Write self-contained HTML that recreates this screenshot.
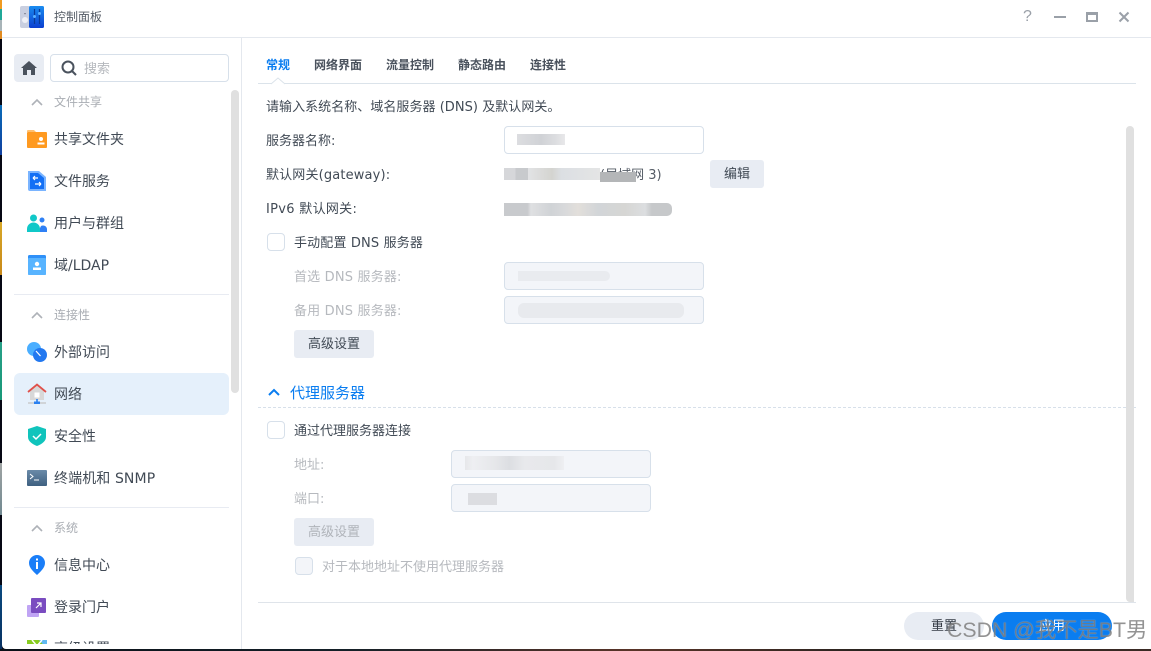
<!DOCTYPE html>
<html><head><meta charset="utf-8"><style>
*{box-sizing:border-box}
html,body{margin:0;padding:0;width:1151px;height:651px;overflow:hidden;background:#0a0d18}
body{position:relative;font-family:"DejaVu Sans","Noto Sans CJK SC",sans-serif;color:#414a55;font-size:13px}
.a{position:absolute}
.t{position:absolute;line-height:20px;white-space:nowrap}
.h{font-size:12px;color:#a9adb3}
.i{font-size:14px;left:54px;color:#414a55}
.tab{font-size:12px;font-weight:700;top:55px;color:#4a525d}
.d{color:#b6b9be}
.inp{position:absolute;width:200px;height:28px;border:1px solid #d7e0ea;border-radius:4px;background:#fff;overflow:hidden}
.dis{background:#f3f5f9}
.cb{position:absolute;width:18px;height:18px;border:1px solid #d7e0ea;border-radius:4px;background:#fff}
.btn{position:absolute;background:#e8ecf3;border-radius:3px;text-align:center;line-height:29px;color:#414a55}
.m{position:absolute}
svg{position:absolute;overflow:visible}
</style></head><body>
<div class="a" style="left:0;top:0;width:2px;height:651px;background:linear-gradient(#f09a20 0,#f09a20 9px,#20a898 9px,#20a898 20px,#a8b4b8 20px,#a8b4b8 31px,#e08a20 31px,#e08a20 39px,#060814 39px,#060814 105px,#0a6cb8 105px,#1040a0 155px,#060814 155px,#060814 222px,#d8a828 222px,#c88818 275px,#060814 275px,#060814 342px,#28a088 342px,#189878 400px,#060814 400px,#060814 463px,#a0a4a4 463px,#708890 515px,#060814 515px,#060814 585px,#0a4a80 585px,#083060 651px)"></div>
<div class="a" style="left:0;top:649px;width:1151px;height:2px;background:linear-gradient(90deg,#0a1018 0,#142028 30%,#5a3428 55%,#2a2420 75%,#3a2a24 100%)"></div>
<div class="a" style="left:2px;top:0;width:1149px;height:649px;background:#fff;border-bottom-left-radius:4px"></div>

<!-- title bar -->
<div class="a" style="left:2px;top:37px;width:1149px;height:1px;background:#e4e8ee"></div>
<svg style="left:20px;top:5px" width="24" height="24" viewBox="0 0 24 24">
<defs><linearGradient id="g1" x1="0" y1="0" x2="0" y2="1"><stop offset="0" stop-color="#1a8cf0"/><stop offset="1" stop-color="#0c3fd0"/></linearGradient></defs>
<rect x="0" y="1" width="10" height="22" rx="2" fill="#c9cfe0"/><circle cx="5" cy="15" r="3" fill="#eef0f6"/><rect x="4.4" y="8" width="1.2" height="1.2" fill="#667"/>
<rect x="9" y="1" width="15" height="22" rx="1.5" fill="url(#g1)"/>
<path d="M14.5 4v15M19.5 4v15" stroke="#0a3a98" stroke-width="1.2"/><rect x="13" y="10" width="3" height="3" rx="1.5" fill="#5ab0ff"/><rect x="18" y="7" width="3" height="3" rx="1.5" fill="#5ab0ff"/></svg>
<div class="t" style="left:54px;top:7px;font-size:12px;color:#555c66">控制面板</div>
<div class="t" style="left:1023px;top:7px;font-size:16px;color:#9aa0a8;font-family:'Liberation Sans',sans-serif">?</div>
<div class="a" style="left:1054px;top:16px;width:12px;height:2px;background:#9aa0a8"></div>
<div class="a" style="left:1086px;top:12px;width:12px;height:10px;border:2px solid #9aa0a8;border-top-width:3px;background:#fff"></div>
<svg style="left:1119px;top:12px" width="10" height="10" viewBox="0 0 10 10"><path d="M.5.5l9 9M9.500.5l-9 9" stroke="#9aa0a8" stroke-width="2" fill="none"/></svg>

<!-- sidebar -->
<div class="a" style="left:241px;top:38px;width:1px;height:611px;background:#e4e8ee"></div>
<div class="a" style="left:14px;top:54px;width:30px;height:28px;background:#e8ecf3;border-radius:4px"></div>
<svg style="left:21px;top:61px" width="16" height="14" viewBox="0 0 16 14"><path d="M8 0L0 7h2v7h4V9h4v5h4V7h2z" fill="#4a525d"/></svg>
<div class="a" style="left:50px;top:54px;width:179px;height:28px;border:1px solid #d7e0ea;border-radius:4px"></div>
<svg style="left:61px;top:60px" width="16" height="16" viewBox="0 0 16 16"><circle cx="7" cy="7" r="5.500" fill="none" stroke="#4a525d" stroke-width="2"/><path d="M11 11l4 4" stroke="#4a525d" stroke-width="2"/></svg>
<div class="t" style="left:84px;top:60px;color:#b5b8bd">搜索</div>
<div class="a" style="left:231px;top:90px;width:8px;height:303px;background:#e0e0e0;border-radius:4px"></div>

<svg style="left:31px;top:98px" width="12" height="8" viewBox="0 0 12 8"><path d="M1 7l5-5 5 5" fill="none" stroke="#aeb2b8" stroke-width="1.600"/></svg>
<div class="t h" style="left:54px;top:92px">文件共享</div>
<svg style="left:27px;top:129px" width="20" height="20" viewBox="0 0 20 20"><path d="M0 2a1 1 0 011-1h6l2 2h-9z" fill="#ffc070"/><rect y="3" width="20" height="16" rx="1" fill="#ff9a20"/><circle cx="14" cy="10" r="2" fill="#fff"/><rect x="10.500" y="13.500" width="7" height="2" fill="#fff"/></svg>
<div class="t i" style="top:130px">共享文件夹</div>
<svg style="left:28px;top:171px" width="18" height="20" viewBox="0 0 18 20"><path d="M0 0h11l7 6v14H2a2 2 0 01-2-2z" fill="#7ab4ff"/><path d="M2 2h8l6 5v11H2z" fill="#1470f5"/><path d="M5 7h5M5 7l2-2M5 7l2 2M13 13H7M13 13l-2-2M13 13l-2 2" stroke="#fff" stroke-width="1.200" fill="none"/></svg>
<div class="t i" style="top:172px">文件服务</div>
<svg style="left:27px;top:213px" width="20" height="20" viewBox="0 0 20 20"><circle cx="6.500" cy="5" r="3.500" fill="#10c8c8"/><circle cx="15" cy="7" r="2.500" fill="#2f80f5"/><path d="M11 19h9v-3a4 4 0 00-6-3z" fill="#2f80f5"/><path d="M0 19v-3a6 6 0 0113 0v3z" fill="#10c8c8"/></svg>
<div class="t i" style="top:214px">用户与群组</div>
<svg style="left:28px;top:255px" width="18" height="20" viewBox="0 0 18 20"><rect width="18" height="20" rx="1.500" fill="#2f90f8"/><rect y="3" width="18" height="17" rx="1" fill="#58b4ff"/><circle cx="9" cy="9" r="2.200" fill="#fff"/><rect x="5" y="12.500" width="8" height="2.500" fill="#fff"/></svg>
<div class="t i" style="top:256px">域/LDAP</div>
<div class="a" style="left:14px;top:294px;width:215px;height:1px;background:#e8ebf2"></div>

<svg style="left:31px;top:311px" width="12" height="8" viewBox="0 0 12 8"><path d="M1 7l5-5 5 5" fill="none" stroke="#aeb2b8" stroke-width="1.600"/></svg>
<div class="t h" style="left:54px;top:305px">连接性</div>
<svg style="left:27px;top:342px" width="20" height="20" viewBox="0 0 20 20"><circle cx="7" cy="7" r="7" fill="#4aaeff"/><circle cx="13" cy="13" r="7" fill="#2278f0"/><path d="M9 9l4.500 5" stroke="#fff" stroke-width="1.200"/></svg>
<div class="t i" style="top:343px">外部访问</div>
<div class="a" style="left:14px;top:373px;width:215px;height:42px;background:#e5f0fb;border-radius:6px"></div>
<svg style="left:27px;top:383px" width="20" height="22" viewBox="0 0 20 22"><path d="M3 8l7-6 7 6v9H3z" fill="#d8d8d8"/><rect x="7.500" y="9.500" width="5" height="5" fill="#fff"/><path d="M1 9l9-7.500L19 9" fill="none" stroke="#e0504a" stroke-width="1.800"/><rect x="1" y="19" width="18" height="2" fill="#d0d4d8"/><rect x="7" y="18.500" width="6" height="2.500" fill="#2a80f0"/><rect x="9.200" y="16" width="1.600" height="3" fill="#2a80f0"/></svg>
<div class="t i" style="top:385px">网络</div>
<svg style="left:28px;top:426px" width="18" height="20" viewBox="0 0 18 20"><path d="M9 0l9 3v8c0 4-4 7-9 9-5-2-9-5-9-9V3z" fill="#10c4bc"/><path d="M5 10l3 3 5-5" fill="none" stroke="#fff" stroke-width="1.500"/></svg>
<div class="t i" style="top:427px">安全性</div>
<svg style="left:27px;top:470px" width="20" height="16" viewBox="0 0 20 16"><defs><linearGradient id="g2" x1="0" y1="0" x2="0" y2="1"><stop offset="0" stop-color="#6a8aa8"/><stop offset="1" stop-color="#3e6080"/></linearGradient></defs><rect width="20" height="16" rx="1" fill="url(#g2)"/><path d="M3 4l3 2.500-3 2.500M7 10h5" fill="none" stroke="#fff" stroke-width="1"/></svg>
<div class="t i" style="top:469px;letter-spacing:.1px">终端机和 SNMP</div>
<div class="a" style="left:14px;top:507px;width:215px;height:1px;background:#e8ebf2"></div>

<svg style="left:31px;top:524px" width="12" height="8" viewBox="0 0 12 8"><path d="M1 7l5-5 5 5" fill="none" stroke="#aeb2b8" stroke-width="1.600"/></svg>
<div class="t h" style="left:54px;top:518px">系统</div>
<svg style="left:29px;top:555px" width="16" height="20" viewBox="0 0 16 20"><path d="M8 20C5 17 0 13 0 8a8 8 0 0116 0c0 5-5 9-8 12z" fill="#1a7ef8"/><rect x="7" y="7" width="2" height="7" fill="#fff"/><rect x="7" y="3.500" width="2" height="2" fill="#fff"/></svg>
<div class="t i" style="top:556px">信息中心</div>
<svg style="left:27px;top:598px" width="20" height="20" viewBox="0 0 20 20"><rect x="0" y="7" width="12" height="12" rx="1" fill="#c0a4f4"/><rect x="4" y="0" width="15" height="15" rx="1" fill="#7a4cc0"/><path d="M9 10l5-5M10 5h4v4" fill="none" stroke="#fff" stroke-width="1.200"/></svg>
<div class="t i" style="top:598px">登录门户</div>
<div class="a" style="left:27px;top:640px;width:20px;height:4px;overflow:hidden"><svg style="left:0;top:0" width="20" height="9" viewBox="0 0 20 9"><rect width="20" height="9" fill="#88cc20"/><path d="M12 0h8v9z" fill="#60b8f0"/><path d="M5 0l5 6 5-6" fill="none" stroke="#fff" stroke-width="1.500"/></svg></div>
<div class="a" style="left:54px;top:640px;width:70px;height:4px;overflow:hidden"><div class="t i" style="left:0;top:-1px">高级设置</div></div>

<!-- tabs -->
<div class="t tab" style="left:266px;color:#0a7df0">常规</div>
<div class="t tab" style="left:314px">网络界面</div>
<div class="t tab" style="left:386px">流量控制</div>
<div class="t tab" style="left:458px">静态路由</div>
<div class="t tab" style="left:530px">连接性</div>
<div class="a" style="left:258px;top:83px;width:878px;height:1px;background:#dbe3ea"></div>
<svg style="left:271px;top:77px" width="14" height="8" viewBox="0 0 14 8"><path d="M0 7l7-6 7 6" fill="#fff" stroke="#dbe3ea"/></svg>

<div class="t" style="left:266px;top:98px;letter-spacing:.04px">请输入系统名称、域名服务器 (DNS) 及默认网关。</div>
<div class="t" style="left:266px;top:132px">服务器名称:</div>
<div class="inp" style="left:504px;top:126px"></div>
<div class="m" style="left:517px;top:134px;width:48px;height:11px;background:linear-gradient(90deg,#dcdde0,#d0d2d6 50%,#dcdde0 80%,#e8e8ea)"></div>

<div class="t" style="left:266px;top:166px;letter-spacing:.15px">默认网关(gateway):</div>
<div class="t" style="left:600px;top:166px;color:#555c66">(局域网 3)</div>
<div class="m" style="left:504px;top:168px;width:96px;height:12px;background:linear-gradient(90deg,#d6d7da 0,#d6d7da 12%,#c8cacd 12%,#c8cacd 25%,#e2e3e5 25%,#d4d4d0 50%,#dcdfe3 60%,#e4e5e5 100%)"></div>
<div class="m" style="left:600px;top:172px;width:36px;height:10px;background:#b4b6b8"></div>
<div class="btn" style="left:710px;top:160px;width:54px;height:28px">编辑</div>

<div class="t" style="left:266px;top:200px;letter-spacing:.3px">IPv6 默认网关:</div>
<div class="m" style="left:504px;top:203px;width:168px;height:13px;border-radius:0 5px 5px 0;background:linear-gradient(90deg,#c8cacd 0,#c8cacd 14%,#dfe0e2 16%,#d0d3d6 28%,#d8d9db 36%,#e2dfdb 44%,#d2d5d8 56%,#d6d6d4 72%,#dcdee0 84%,#c6c8ca 88%,#c6c8ca 100%)"></div>

<div class="cb" style="left:267px;top:233px"></div>
<div class="t" style="left:294px;top:234px;letter-spacing:.15px">手动配置 DNS 服务器</div>
<div class="t d" style="left:294px;top:268px;letter-spacing:.18px">首选 DNS 服务器:</div>
<div class="inp dis" style="left:504px;top:262px"></div>
<div class="m" style="left:518px;top:271px;width:92px;height:10px;background:#e9ebef;border-radius:0 5px 5px 0"></div>
<div class="t d" style="left:294px;top:302px;letter-spacing:.18px">备用 DNS 服务器:</div>
<div class="inp dis" style="left:504px;top:296px"></div>
<div class="m" style="left:518px;top:303px;width:166px;height:15px;background:#e8eaee;border-radius:6px"></div>
<div class="btn" style="left:294px;top:330px;width:80px;height:28px">高级设置</div>

<svg style="left:268px;top:388px" width="12" height="8" viewBox="0 0 12 8"><path d="M1 7l5-5 5 5" fill="none" stroke="#0a7df0" stroke-width="2"/></svg>
<div class="t" style="left:290px;top:383px;font-size:15px;color:#0a7df0">代理服务器</div>
<div class="a" style="left:258px;top:407px;width:878px;height:0;border-top:1px dashed #d7e0ea"></div>

<div class="cb" style="left:267px;top:421px"></div>
<div class="t" style="left:294px;top:422px">通过代理服务器连接</div>
<div class="t d" style="left:294px;top:456px">地址:</div>
<div class="inp dis" style="left:451px;top:450px"></div>
<div class="m" style="left:465px;top:456px;width:99px;height:14px;background:linear-gradient(90deg,#e6e7ea 0,#eeeff2 8%,#e6e7ea 30%,#dcdee2 45%,#e8e9ec 60%,#e6e7ea 90%,#eeeff2 100%)"></div>
<div class="t d" style="left:294px;top:490px">端口:</div>
<div class="inp dis" style="left:451px;top:484px"></div>
<div class="m" style="left:468px;top:493px;width:29px;height:12px;background:#dcdde1"></div>
<div class="btn d" style="left:294px;top:518px;width:80px;height:28px;color:#b0b4ba">高级设置</div>
<div class="cb dis" style="left:295px;top:557px;background:#f3f5f9"></div>
<div class="t d" style="left:322px;top:558px">对于本地地址不使用代理服务器</div>

<div class="a" style="left:1126px;top:126px;width:8px;height:476px;background:#e0e0e0;border-radius:4px 4px 0 4px"></div>
<div class="a" style="left:258px;top:602px;width:878px;height:1px;background:#dfe4ea"></div>

<div class="btn" style="left:904px;top:612px;width:80px;height:28px;border-radius:14px;color:#333a44">重置</div>
<div class="btn" style="left:992px;top:612px;width:120px;height:28px;border-radius:14px;background:#0a7df0;color:#fff">应用</div>
<div class="t" style="left:947px;top:618px;font-size:21.3px;line-height:24px;font-family:'Liberation Sans','Noto Sans CJK SC',sans-serif;color:rgba(105,105,105,.72);text-shadow:0 0 1px rgba(255,255,255,.5)">CSDN @我不是BT男</div>
</body></html>
